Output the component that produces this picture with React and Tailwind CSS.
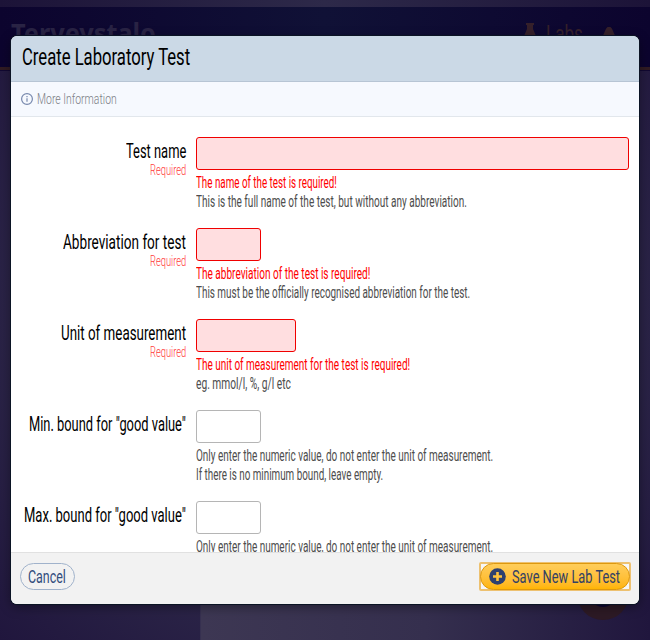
import { useLayoutEffect, useRef, useState } from "react";

// Condensed line of text, squeezed horizontally to the given width.
function Fit({ w, children, className = "" }) {
  const ref = useRef(null);
  const [scale, setScale] = useState(1);
  useLayoutEffect(() => {
    const natural = ref.current.offsetWidth;
    if (natural) setScale(w / natural);
  }, [w]);
  return (
    <span className={`block whitespace-nowrap ${className}`} style={{ width: w }}>
      <span ref={ref} className="inline-block origin-left" style={{ transform: `scaleX(${scale})` }}>
        {children}
      </span>
    </span>
  );
}

const fields = [
  { label: "Test name", lw: 60, box: "w-[433px]", error: "The name of the test is required!", ew: 141, help: [["This is the full name of the test, but without any abbreviation.", 271]] },
  { label: "Abbreviation for test", lw: 123, box: "w-[65px]", error: "The abbreviation of the test is required!", ew: 174, help: [["This must be the officially recognised abbreviation for the test.", 274]] },
  { label: "Unit of measurement", lw: 125, box: "w-[100px]", error: "The unit of measurement for the test is required!", ew: 214, help: [["eg. mmol/l, %, g/l etc", 95]] },
  { label: 'Min. bound for "good value"', lw: 157, box: "w-[65px]", help: [["Only enter the numeric value, do not enter the unit of measurement.", 297], ["If there is no minimum bound, leave empty.", 187]] },
  { label: 'Max. bound for "good value"', lw: 162, box: "w-[65px]", help: [["Only enter the numeric value, do not enter the unit of measurement.", 297]] },
];

function Field({ f }) {
  return (
    <div className="flex h-[91px] shrink-0 gap-[10px]">
      <div className="flex w-[175px] shrink-0 flex-col items-end pt-[2px]">
        <Fit w={f.lw} className="text-[20px] leading-6 text-black">{f.label}</Fit>
        {f.error && <Fit w={36} className="text-[14px] leading-[14px] font-light text-[#ff3b3b]">Required</Fit>}
      </div>
      <div className="flex flex-col">
        <div className={`mb-[3px] h-[33px] rounded-[3px] border ${f.box} ${f.error ? "border-[#f00000] bg-[#ffdee0]" : "border-[#b5b5b5] bg-white"}`} />
        {f.error && <Fit w={f.ew} className="text-[16px] leading-[19px] text-[#ff0000]">{f.error}</Fit>}
        {f.help.map(([t, w]) => (
          <Fit key={t} w={w} className="text-[16px] leading-[19px] text-[#4d4d4d]">{t}</Fit>
        ))}
      </div>
    </div>
  );
}

function Backdrop() {
  return (
    <div className="flex h-full flex-col bg-[radial-gradient(ellipse_at_50%_50%,#3d385c_0%,#302b4c_50%,#20163d_100%)]">
      <div className="h-[7px] bg-linear-to-r from-[#1c1338] via-[#2d2949] to-[#1c1338]" />
      <div className="flex h-[60px] shrink-0 items-start justify-between bg-linear-to-r from-[#0c042e] via-[#101136] to-[#0c042e] pt-[12px] pr-[34px] pl-[11px]">
        <Fit w={145} className="text-[26px] leading-7 font-bold text-[#292344] font-['Noto_Sans',sans-serif]">Terveystalo</Fit>
        <div className="flex text-[#35202a]">
          <svg width="12" height="26" viewBox="0 0 12 26" className="mt-[3px] mr-[10px]" fill="currentColor">
            <path d="M2 1h8v2H9v4l3 7v6H0v-6l3-7V3H2z" />
          </svg>
          <Fit w={37} className="pt-[2px] text-[23px] leading-7">Labs</Fit>
          <svg width="14" height="24" viewBox="0 0 14 24" className="mt-[7px] ml-[19px]" fill="currentColor">
            <path d="M5.5 1h3Q10 2 11 5l3 7v8H0v-8l3-7Q4 2 5.500 1z" />
          </svg>
        </div>
      </div>
      <div className="h-[3px] shrink-0 bg-[#301b23]" />
      <div className="h-px shrink-0 bg-[#110832]" />
      <div className="flex flex-1 items-end">
        <div className="ml-[200px] h-[60px] flex-1 border-l border-[#363050] bg-linear-to-r from-[#3d3753] via-[#352f4e] to-[#20163d]" />
      </div>
      <div className="absolute top-[568px] left-[577px] flex size-[52px] items-center justify-center rounded-full bg-[#2d1a25]">
        <div className="size-[26px] rounded-full bg-[#0d0632]" />
      </div>
    </div>
  );
}

export default function App() {
  return (
    <div className="relative h-[640px] w-[650px] overflow-hidden font-[Roboto,sans-serif]">
      <Backdrop />
      <div className="absolute top-9 left-[11px] flex h-[568px] w-[628px] flex-col overflow-hidden rounded-md bg-white shadow-[0_0_0_1px_#0b1424,0_3px_12px_rgba(0,0,0,0.4)]">
        <div className="flex h-[46px] shrink-0 items-center border-b border-[#b7c5d4] bg-[#cbd9e6] pb-px pl-[11px]">
          <Fit w={168} className="text-[23px] leading-7 text-black">Create Laboratory Test</Fit>
        </div>
        <div className="flex h-[35px] shrink-0 items-center gap-1 border-b border-[#e2e7ec] bg-[#f6f9fe] pl-[10px]">
          <svg width="12" height="12" viewBox="0 0 12 12" fill="none" stroke="#7788ad">
            <circle cx="6" cy="6" r="5.4" strokeWidth="1.2" />
            <path d="M6 5.2v3.5M6 3v1.2" strokeWidth="1.2" />
          </svg>
          <Fit w={80} className="text-[15px] leading-5 font-light text-[#7c8086]">More Information</Fit>
        </div>
        <div className="flex min-h-0 flex-1 flex-col overflow-hidden pt-5">
          {fields.map((f) => (
            <Field key={f.label} f={f} />
          ))}
        </div>
        <div className="flex h-[52px] shrink-0 items-start justify-between border-t border-[#e1e1e1] bg-[#f2f2f2] pt-[9px] pr-2 pl-[9px]">
          <button className="mt-px flex h-[27px] w-[55px] items-center rounded-full border border-[#a0b2cb] pl-[7px]">
            <Fit w={38} className="text-left text-[19px] leading-6 text-[#334d7d]">Cancel</Fit>
          </button>
          <div className="h-[29px] w-[152px] rounded-[2px] border-2 border-[#edc170] bg-white/40">
            <button className="-mt-px -ml-px flex h-[27px] w-[150px] items-center gap-[6px] rounded-full border border-[#dd980f] bg-linear-to-b from-[#ffcd59] to-[#ffb500] pl-2">
              <svg width="17" height="17" viewBox="0 0 17 17">
                <circle cx="8.5" cy="8.5" r="8.3" fill="#2e416f" />
                <path d="M8.5 4v9M4 8.5h9" stroke="#ffc33d" strokeWidth="2.6" />
              </svg>
              <Fit w={108} className="text-left text-[19px] leading-6 text-[#334164]">Save New Lab Test</Fit>
            </button>
          </div>
        </div>
      </div>
    </div>
  );
}
